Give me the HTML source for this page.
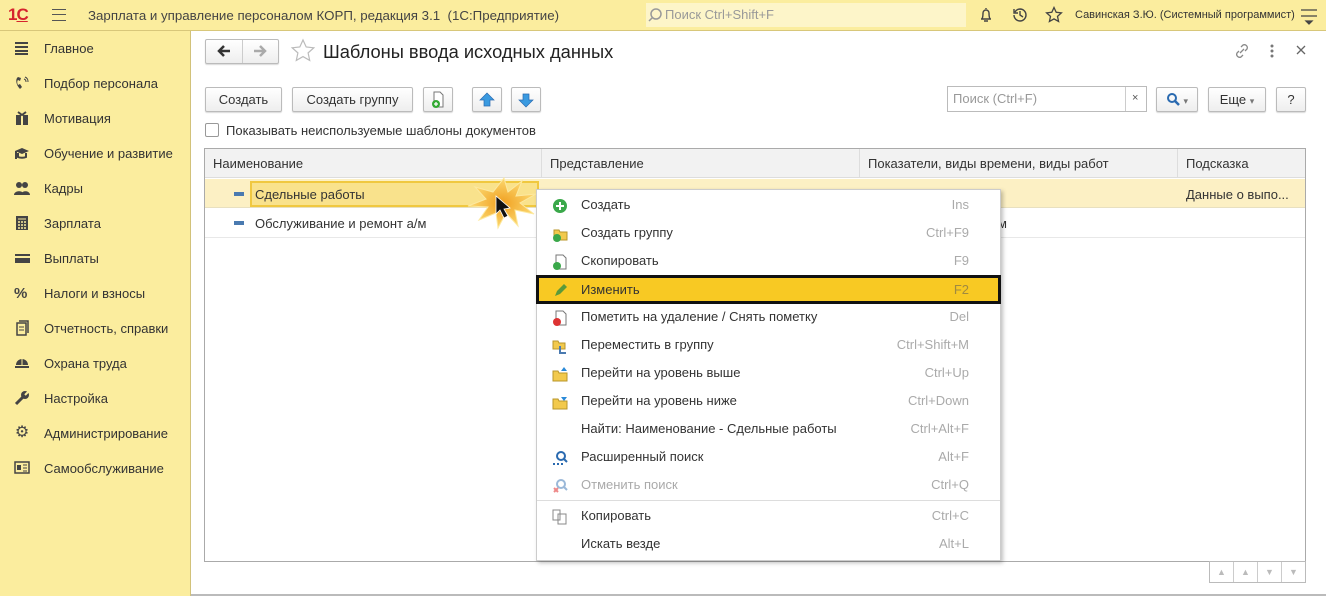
<!DOCTYPE html>
<html><head><meta charset="utf-8"><style>
*{box-sizing:border-box;margin:0;padding:0}
body{width:1326px;height:596px;overflow:hidden;font-family:"Liberation Sans",Arial,sans-serif;font-size:13px;color:#333;background:#fff;position:relative}
.abs{position:absolute}
#top{left:0;top:0;width:1326px;height:31px;background:#fbed9e;border-bottom:1px solid #d8c77a}
#side{left:0;top:31px;width:191px;height:565px;background:#fbed9e;border-right:1px solid #d2c27a}
.si{position:absolute;left:44px;font-size:13px;color:#333}
.ic{position:absolute;left:14px;width:16px;height:16px}
.btn{position:absolute;height:25px;border:1px solid #bbb;border-radius:2px;background:linear-gradient(#fff,#eee);box-shadow:0 1px 1px rgba(0,0,0,.15);font-size:13px;line-height:23px;text-align:center;color:#333}
.mi{position:absolute;left:0;width:464px;height:28px;line-height:28px}
.mi .t{position:absolute;left:44px}
.mi .k{position:absolute;right:32px;color:#aaa}
.mi .g{position:absolute;left:15px;top:7px;width:16px;height:16px}
</style></head><body>
<div id="top" class="abs">
 <div class="abs" style="left:8px;top:5px;color:#d5232d;font-weight:bold;font-size:17px;letter-spacing:-1px">1<span style="text-decoration:underline">С</span></div>
 <div class="abs" style="left:52px;top:9px;width:14px;height:12px;border-top:1.5px solid #555;border-bottom:1.5px solid #555"><div style="margin-top:4px;border-top:1.5px solid #555"></div></div>
 <div class="abs" style="left:88px;top:8px;font-size:13.3px;color:#444">Зарплата и управление персоналом КОРП, редакция 3.1 &nbsp;(1С:Предприятие)</div>
 <div class="abs" style="left:646px;top:3px;width:320px;height:24px;background:#fdf5c9;color:#999;font-size:13px;line-height:24px;padding-left:19px">Поиск Ctrl+Shift+F</div>
 <svg class="abs" style="left:648px;top:7px" width="16" height="16"><circle cx="8" cy="7" r="5" fill="none" stroke="#999" stroke-width="1.5"/><path d="M4 11l-3 3" stroke="#999" stroke-width="1.5"/></svg>
 <svg class="abs" style="left:977px;top:6px" width="18" height="18"><path d="M9 2v1M4 13h10M5 13c1-2 1-4 1-6a3 3 0 016 0c0 2 0 4 1 6M7 15h4" fill="none" stroke="#444" stroke-width="1.4"/></svg>
 <svg class="abs" style="left:1011px;top:6px" width="18" height="18"><path d="M3 9a6 6 0 106-6 6 6 0 00-5 3M3 3v4h4M9 5v4l3 2" fill="none" stroke="#444" stroke-width="1.4"/></svg>
 <svg class="abs" style="left:1045px;top:6px" width="18" height="18"><path d="M9 1.5l2.2 4.8 5.2.6-3.9 3.5 1.1 5.1L9 12.9l-4.6 2.6 1.1-5.1L1.6 6.9l5.2-.6z" fill="none" stroke="#444" stroke-width="1.3"/></svg>
 <div class="abs" style="left:1075px;top:9px;font-size:11px;color:#333">Савинская З.Ю. (Системный программист)</div>
 <svg class="abs" style="left:1300px;top:7px" width="18" height="18"><path d="M1 3h16M1 9h16M6 14h6l-3 3z" fill="#444" stroke="#444" stroke-width="1.3"/></svg>
</div>
<div id="side" class="abs">
 <svg class="ic" style="top:9px"><path d="M1 3h13M1 7h13M1 11h13M1 14h13" stroke="#444" stroke-width="2"/></svg><div class="si" style="top:10px">Главное</div>
 <svg class="ic" style="top:44px"><path d="M4 2c-3 2-2 8 2 12l2-2-2-3-2 1c-1-2-1-4 0-5l2 1 1-3z" fill="#444"/><path d="M10 4a3 3 0 012 3M11 2a5 5 0 013 5" stroke="#444" fill="none"/></svg><div class="si" style="top:45px">Подбор персонала</div>
 <svg class="ic" style="top:79px"><rect x="2" y="5" width="12" height="10" fill="#444"/><rect x="7" y="5" width="2" height="10" fill="#fbed9e"/><path d="M4 2l4 3 4-3" stroke="#444" stroke-width="2" fill="none"/></svg><div class="si" style="top:80px">Мотивация</div>
 <svg class="ic" style="top:114px"><path d="M1 6l7-3 7 3-7 3z" fill="#444"/><path d="M4 8v4c2 1 6 1 8 0V8M2 6v8" stroke="#444" stroke-width="2" fill="none"/></svg><div class="si" style="top:115px">Обучение и развитие</div>
 <svg class="ic" style="top:149px"><circle cx="5" cy="5" r="3" fill="#444"/><circle cx="11" cy="5" r="3" fill="#444"/><path d="M0 15c0-5 10-5 10 0zM7 15c0-5 9-5 9 0z" fill="#444"/></svg><div class="si" style="top:150px">Кадры</div>
 <svg class="ic" style="top:184px"><rect x="2" y="1" width="12" height="14" fill="#444"/><path d="M4 4h8" stroke="#fbed9e"/><path d="M4 7h2M7 7h2M10 7h2M4 10h2M7 10h2M10 10h2M4 13h2M7 13h2M10 13h2" stroke="#fbed9e" stroke-width="1.5"/></svg><div class="si" style="top:185px">Зарплата</div>
 <svg class="ic" style="top:219px"><rect x="1" y="4" width="15" height="9" fill="#444"/><rect x="1" y="6" width="15" height="2" fill="#fbed9e"/></svg><div class="si" style="top:220px">Выплаты</div>
 <div class="ic" style="top:255px;font-weight:bold;font-size:15px;color:#444;line-height:16px">%</div><div class="si" style="top:255px">Налоги и взносы</div>
 <svg class="ic" style="top:289px"><path d="M5 1h9v12M3 3h9v12H3z" fill="none" stroke="#444" stroke-width="1.5"/><path d="M5 7h5M5 10h5" stroke="#444"/></svg><div class="si" style="top:290px">Отчетность, справки</div>
 <svg class="ic" style="top:324px"><path d="M2 10a6 6 0 0112 0zM1 11h14v2H1z" fill="#444"/><path d="M8 4v6" stroke="#fbed9e"/></svg><div class="si" style="top:325px">Охрана труда</div>
 <svg class="ic" style="top:359px"><path d="M2 14l7-7" stroke="#444" stroke-width="3"/><circle cx="11" cy="5" r="4" fill="#444"/><path d="M11 5l4-4" stroke="#fbed9e" stroke-width="2"/></svg><div class="si" style="top:360px">Настройка</div>
 <div class="ic" style="top:394px;font-size:16px;color:#444;line-height:16px;text-align:center">⚙</div><div class="si" style="top:395px">Администрирование</div>
 <svg class="ic" style="top:429px"><rect x="1" y="2" width="14" height="11" fill="none" stroke="#444" stroke-width="1.5"/><rect x="3" y="5" width="4" height="5" fill="#444"/><path d="M9 5h4M9 8h4M9 11h4" stroke="#444"/></svg><div class="si" style="top:430px">Самообслуживание</div>
</div>
<div class="btn" style="left:205px;top:39px;width:74px;height:25px"></div>
<div class="abs" style="left:242px;top:40px;width:1px;height:23px;background:#ccc"></div>
<svg class="abs" style="left:216px;top:44px" width="16" height="14"><path d="M14 7H4M8 2L3 7l5 5" stroke="#333" stroke-width="2.5" fill="none"/></svg>
<svg class="abs" style="left:252px;top:44px" width="16" height="14"><path d="M2 7h10M8 2l5 5-5 5" stroke="#aaa" stroke-width="2.5" fill="none"/></svg>
<svg class="abs" style="left:290px;top:38px" width="26" height="26"><path d="M13 2l3.2 7 7.6.8-5.7 5.1 1.6 7.5L13 18.6l-6.7 3.8 1.6-7.5L2.2 9.8l7.6-.8z" fill="none" stroke="#bbb" stroke-width="1.2"/></svg>
<div class="abs" style="left:323px;top:41px;font-size:18.3px;color:#222">Шаблоны ввода исходных данных</div>
<svg class="abs" style="left:1233px;top:42px" width="18" height="18"><path d="M7 11l4-4M8 5l2-2a3 3 0 014 4l-2 2M10 13l-2 2a3 3 0 01-4-4l2-2" stroke="#888" stroke-width="1.3" fill="none"/></svg>
<svg class="abs" style="left:1268px;top:43px" width="8" height="16"><circle cx="4" cy="3" r="1.5" fill="#777"/><circle cx="4" cy="8" r="1.5" fill="#777"/><circle cx="4" cy="13" r="1.5" fill="#777"/></svg>
<svg class="abs" style="left:1296px;top:45px" width="10" height="10"><path d="M1 1l8 8M9 1l-8 8" stroke="#666" stroke-width="1.3"/></svg>
<div class="btn" style="left:205px;top:87px;width:77px">Создать</div>
<div class="btn" style="left:292px;top:87px;width:121px">Создать группу</div>
<div class="btn" style="left:423px;top:87px;width:30px"><svg width="16" height="18" style="margin-top:3px"><path d="M4 1h6l3 3v12H4z" fill="#fff" stroke="#777"/><circle cx="6" cy="13" r="4" fill="#3a3"/><path d="M6 11v4M4 13h4" stroke="#fff" stroke-width="1.3"/></svg></div>
<div class="btn" style="left:472px;top:87px;width:30px"><svg width="16" height="16" style="margin-top:4px"><path d="M8 1l7 7h-4v6H5V8H1z" fill="#3a9ae0" stroke="#2a6ab0" stroke-width=".7"/></svg></div>
<div class="btn" style="left:511px;top:87px;width:30px"><svg width="16" height="16" style="margin-top:4px"><path d="M8 15l7-7h-4V2H5v6H1z" fill="#3a9ae0" stroke="#2a6ab0" stroke-width=".7"/></svg></div>
<div class="abs" style="left:947px;top:86px;width:200px;height:26px;border:1px solid #bbb;background:#fff;color:#999;line-height:24px;padding-left:5px">Поиск (Ctrl+F)</div>
<div class="abs" style="left:1125px;top:87px;width:1px;height:24px;background:#ccc"></div>
<div class="abs" style="left:1132px;top:92px;font-size:11px;color:#555">×</div>
<div class="btn" style="left:1156px;top:87px;width:42px"><svg width="14" height="14" style="vertical-align:-2px"><circle cx="6" cy="6" r="4" fill="none" stroke="#2a6ab0" stroke-width="2"/><path d="M9 9l4 4" stroke="#2a6ab0" stroke-width="2.5"/></svg> <span style="color:#777;font-size:9px">▾</span></div>
<div class="btn" style="left:1208px;top:87px;width:58px">Еще <span style="color:#777;font-size:9px">▾</span></div>
<div class="btn" style="left:1276px;top:87px;width:30px">?</div>
<div class="abs" style="left:205px;top:123px;width:14px;height:14px;border:1px solid #999;border-radius:2px;background:#fff"></div>
<div class="abs" style="left:226px;top:123px;color:#333">Показывать неиспользуемые шаблоны документов</div>
<div class="abs" style="left:204px;top:148px;width:1102px;height:414px;border:1px solid #aaa;background:#fff"></div>
<div class="abs" style="left:205px;top:149px;width:1100px;height:29px;background:#f2f2f2;border-bottom:1px solid #ddd"></div>
<div class="abs" style="left:541px;top:149px;width:1px;height:29px;background:#ddd"></div>
<div class="abs" style="left:859px;top:149px;width:1px;height:29px;background:#ddd"></div>
<div class="abs" style="left:1177px;top:149px;width:1px;height:29px;background:#ddd"></div>
<div class="abs" style="left:213px;top:156px">Наименование</div>
<div class="abs" style="left:550px;top:156px">Представление</div>
<div class="abs" style="left:868px;top:156px">Показатели, виды времени, виды работ</div>
<div class="abs" style="left:1186px;top:156px">Подсказка</div>
<div class="abs" style="left:205px;top:179px;width:1100px;height:29px;background:#fcf0c4;border-bottom:1px solid #e8e0c0"></div>
<div class="abs" style="left:250px;top:181px;width:289px;height:26px;background:#f9e28c;border:2px solid #f0c840"></div>
<div class="abs" style="left:234px;top:192px;width:10px;height:4px;background:#4a7ab0"></div>
<div class="abs" style="left:255px;top:187px">Сдельные работы</div>
<div class="abs" style="left:1186px;top:187px">Данные о выпо...</div>
<div class="abs" style="left:205px;top:237px;width:1100px;height:1px;background:#e8e8e8"></div>
<div class="abs" style="left:234px;top:221px;width:10px;height:4px;background:#4a7ab0"></div>
<div class="abs" style="left:255px;top:216px">Обслуживание и ремонт а/м</div>
<div class="abs" style="left:998px;top:216px">м</div>
<svg class="abs" style="left:464px;top:176px" width="76" height="56"><defs><radialGradient id="sg"><stop offset="0" stop-color="#f0a020"/><stop offset="1" stop-color="#fcd870"/></radialGradient></defs><polygon points="40,2 44,16 58,5 52,20 72,18 56,27 70,38 51,34 54,50 42,37 34,52 32,37 15,44 24,31 4,30 22,23 11,11 29,16" fill="url(#sg)" stroke="#fde9a0" stroke-width="1"/><polygon points="32,20 32,38 36,34 40,42 44,40 40,33 46,32" fill="#111" stroke="#fff" stroke-width=".8"/></svg>
<div class="abs" style="left:536px;top:189px;width:465px;height:372px;background:#fff;border:1px solid #ccc;box-shadow:2px 2px 4px rgba(0,0,0,.25)">
 <div class="mi" style="top:1px"><svg class="g" viewBox="0 0 16 16"><circle cx="8" cy="8" r="7" fill="#3aa84a"/><path d="M8 4v8M4 8h8" stroke="#fff" stroke-width="2"/></svg><span class="t">Создать</span><span class="k">Ins</span></div>
 <div class="mi" style="top:29px"><svg class="g" viewBox="0 0 16 16"><path d="M2 4h5l1 2h7v8H2z" fill="#f2c94c" stroke="#b8962a"/><circle cx="5" cy="12" r="4" fill="#3aa84a"/></svg><span class="t">Создать группу</span><span class="k">Ctrl+F9</span></div>
 <div class="mi" style="top:57px"><svg class="g" viewBox="0 0 16 16"><path d="M4 1h7l3 3v11H4z" fill="#fff" stroke="#777"/><circle cx="5" cy="12" r="4" fill="#3aa84a"/></svg><span class="t">Скопировать</span><span class="k">F9</span></div>
 <div class="mi" style="top:85px;left:-1px;width:465px;height:29px;background:#f8c923;border:3px solid #111"><svg class="g" viewBox="0 0 16 16" style="top:5px;left:13px"><path d="M3 13l2-5 7-7 3 3-7 7z" fill="#5a9a3a"/></svg><span class="t" style="left:42px;line-height:23px">Изменить</span><span class="k" style="line-height:23px;right:29px;color:#a08a40">F2</span></div>
 <div class="mi" style="top:113px"><svg class="g" viewBox="0 0 16 16"><path d="M4 1h7l3 3v11H4z" fill="#fff" stroke="#777"/><circle cx="5" cy="12" r="4" fill="#d33"/></svg><span class="t">Пометить на удаление / Снять пометку</span><span class="k">Del</span></div>
 <div class="mi" style="top:141px"><svg class="g" viewBox="0 0 16 16"><path d="M1 3h5l1 2h6v6H1z" fill="#f2c94c" stroke="#b8962a"/><path d="M8 8v7h6" stroke="#4a7ab0" stroke-width="2" fill="none"/></svg><span class="t">Переместить в группу</span><span class="k">Ctrl+Shift+M</span></div>
 <div class="mi" style="top:169px"><svg class="g" viewBox="0 0 16 16"><path d="M1 5h5l1 2h8v8H1z" fill="#f2c94c" stroke="#b8962a"/><path d="M12 1l-3 4h6z" fill="#2a8ad8"/></svg><span class="t">Перейти на уровень выше</span><span class="k">Ctrl+Up</span></div>
 <div class="mi" style="top:197px"><svg class="g" viewBox="0 0 16 16"><path d="M1 5h5l1 2h8v8H1z" fill="#f2c94c" stroke="#b8962a"/><path d="M12 7l-3-4h6z" fill="#2a8ad8"/></svg><span class="t">Перейти на уровень ниже</span><span class="k">Ctrl+Down</span></div>
 <div class="mi" style="top:225px"><span class="t">Найти: Наименование - Сдельные работы</span><span class="k">Ctrl+Alt+F</span></div>
 <div class="mi" style="top:253px"><svg class="g" viewBox="0 0 16 16"><circle cx="9" cy="6" r="4" fill="none" stroke="#2a6ab0" stroke-width="2"/><path d="M12 9l3 3" stroke="#2a6ab0" stroke-width="2"/><path d="M1 14h2M5 14h2M9 14h2" stroke="#2a6ab0" stroke-width="2"/></svg><span class="t">Расширенный поиск</span><span class="k">Alt+F</span></div>
 <div class="mi" style="top:281px"><svg class="g" viewBox="0 0 16 16"><circle cx="9" cy="6" r="4" fill="none" stroke="#9ab8d8" stroke-width="2"/><path d="M12 9l3 3" stroke="#9ab8d8" stroke-width="2"/><path d="M2 10l4 4M6 10l-4 4" stroke="#e88" stroke-width="2"/></svg><span class="t" style="color:#aaa">Отменить поиск</span><span class="k">Ctrl+Q</span></div>
 <div class="abs" style="left:0;top:310px;width:463px;height:1px;background:#ddd"></div>
 <div class="mi" style="top:312px"><svg class="g" viewBox="0 0 16 16"><path d="M1 1h7v10H1zM6 5h8v10H6z" fill="#fff" stroke="#888"/></svg><span class="t">Копировать</span><span class="k">Ctrl+C</span></div>
 <div class="mi" style="top:340px"><span class="t">Искать везде</span><span class="k">Alt+L</span></div>
</div>
<div class="abs" style="left:1209px;top:561px;width:97px;height:22px;border:1px solid #bbb;background:#fff;display:flex">
 <div style="flex:1;border-right:1px solid #ccc;color:#bbb;font-size:9px;text-align:center;line-height:20px">▲</div>
 <div style="flex:1;border-right:1px solid #ccc;color:#bbb;font-size:9px;text-align:center;line-height:20px">▲</div>
 <div style="flex:1;border-right:1px solid #ccc;color:#bbb;font-size:9px;text-align:center;line-height:20px">▼</div>
 <div style="flex:1;color:#bbb;font-size:9px;text-align:center;line-height:20px">▼</div>
</div>
<div class="abs" style="left:191px;top:594px;width:1135px;height:2px;background:#bbb"></div>
</body></html>
